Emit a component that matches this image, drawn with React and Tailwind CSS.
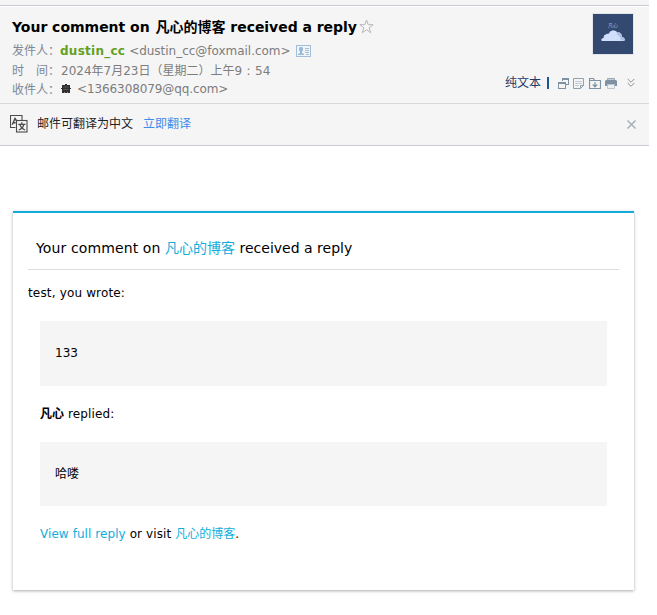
import React from 'react';

function AddressCard() {
  return (
    <svg className="ml-[5px] shrink-0" width="15" height="12" viewBox="0 0 15 12">
      <rect x=".5" y=".5" width="14" height="11" fill="#edf4fa" stroke="#a3bed8" />
      <path d="M2 10V9l2-1V7L3 5V3l1-1h2l1 1v2L6 7v1l2 1v1z" fill="#9bbad8" />
      <path d="M9 3.5h4M9 5.5h4M9 7.5h4M10 9.5h3" stroke="#a9bdcf" />
    </svg>
  );
}

function TranslateIcon() {
  return (
    <svg className="shrink-0" width="18" height="18" viewBox="0 0 18 18" fill="none" stroke="#4a4a4a" strokeWidth="1.1">
      <path d="M5.500 12.500H.5V.5h11.500V5" />
      <rect x="6.500" y="5.500" width="10.500" height="11.500" />
      <path d="M2.200 9.800 5 3.500l1.300 2M3.400 7.700h2.300" strokeWidth="1.400" />
      <path d="M8.300 9.300h7.200M11.800 7.300v2M8.800 15c2.800-1.200 4.500-3 5-5.700M9.900 9.300c.7 2.700 2.400 4.500 5.200 5.700" strokeWidth="1.300" />
    </svg>
  );
}

function Avatar() {
  return (
    <div className="flex h-[42px] w-[42px] flex-col items-center border border-[#e2e5ea] bg-[#344970]">
      <span className="mt-[8px] h-[8px] text-[5px] leading-[7px] text-[#a3b2d3]">凡心</span>
      <svg width="24" height="12" viewBox="0 0 24 12">
        <path d="M1 11a1.500 1.500 0 0 1 0-2.500L2.500 8 3 5.500 5.500 4 8 3.500l1-2L12 .3l3 .7 1 1.200 2.500.3 2 2 .5 2.500 2 .8L24 10l-1 1z" fill="#cfdffc" />
        <path d="m15 1.300 1 1 2.500.2 2 2 .5 2.500 2 .8L24 10l-1 .5h-3L19 7l-2.500-2z" fill="#b0c0e0" />
      </svg>
    </div>
  );
}

function Toolbar() {
  return (
    <div className="-mr-px flex h-4 items-center">
      <span className="text-[#1e3a66]">纯文本</span>
      <i className="ml-[6px] h-[12px] w-[2px] bg-[#1e5494]" />
      <svg className="ml-[9px]" width="11" height="11" viewBox="0 0 11 11" fill="none" stroke="#7e92a3" shapeRendering="crispEdges">
        <path d="M4.500 3V.5h6v6H7" /><path d="M4 1h7" strokeWidth="2" />
        <rect x=".5" y="4.500" width="7" height="6" fill="#f5f5f5" /><path d="M0 5h8" strokeWidth="2" />
      </svg>
      <svg className="ml-[4px]" width="11" height="11" viewBox="0 0 11 11" fill="none" stroke="#8fa0af">
        <path d="M.5.500h10v7l-3 3h-7z" /><path d="M2 3.500h7M2 5.500h7M2 7.500h4" stroke="#c3ccd4" /><path d="M7.500 10.500v-3h3" />
      </svg>
      <svg className="ml-[5px]" width="12" height="11" viewBox="0 0 12 11" fill="none" stroke="#7e92a3">
        <path d="M.5 10.500v-10h4l1 2h6v8z" strokeWidth="1.200" /><path d="M1 2.500h4" /><path d="M6 4v5M3.800 6.500 6 8.800l2.200-2.300" strokeWidth="1.200" />
      </svg>
      <svg className="ml-[4px]" width="12" height="11" viewBox="0 0 12 11">
        <path d="M2.500 3V.5h7V3" fill="#c3ccd4" stroke="#9baab6" />
        <path d="M1 2h10l1 1v5H0V3z" fill="#7e92a3" /><path d="M2.500 6.500h7v4h-7z" fill="#eef1f3" stroke="#b9c4cd" />
      </svg>
      <svg className="ml-[10px]" width="8" height="10" viewBox="0 0 8 10" fill="none" stroke="#8c8c8c">
        <path d="m.7 1 3.300 3.300L7.300 1M.7 5 4 8.300 7.300 5" />
      </svg>
    </div>
  );
}

function Header() {
  return (
    <header className="w-[649px] bg-[#f5f5f5] text-[#7c7c7c]">
      <div className="h-[6px] border-b border-[#c9c9d8]" />
      <div className="flex h-[98px] justify-between border-b border-t border-b-[#d8d8d8] border-t-white pl-[12px] pr-[15px]">
        <div className="pt-[10px]">
          <h1 className="flex h-[20px] items-center text-[14px] font-bold text-black">
            <span><span className="tracking-[-0.02px]">Your comment on </span><span className="ml-px">凡心的博客</span><span className="tracking-[-0.04px]"> received a reply</span></span>
            <svg className="mb-[2px] ml-[2px]" width="15" height="15" viewBox="0 0 15 15" fill="#fafafa" stroke="#b5b5b5">
              <path d="m7.500 1 1.700 4.700h4.900l-4 3 1.600 5-4.200-3-4.200 3 1.600-5-4-3h4.900z" />
            </svg>
          </h1>
          <div className="mt-[4px] flex h-[20px] items-center">
            <span className="w-[48px] text-[#7d8795]">发件人：</span>
            <b className="tracking-[0.25px] text-[#64a01e]">dustin_cc</b>
            <span className="ml-[4px] tracking-[-0.02px]">&lt;dustin_cc@foxmail.com&gt;</span>
            <AddressCard />
          </div>
          <div className="flex h-[20px] items-center whitespace-pre">
            <span className="w-[49px] text-[#7d8795]">时　间：</span>
            <span>2024年7月23日（星期二）上午9<span className="mx-[2.500px] inline-block w-[8px] text-center">:</span>54</span>
          </div>
          <div className="flex h-[17px] items-center">
            <span className="w-[49px] text-[#7d8795]">收件人：</span>
            <svg className="mb-px" width="10" height="10" viewBox="0 0 10 10" fill="#303030">
              <path d="M4 0h2v1h3v3h1v1H9v4H7V8.500H6V9H4v-.5H3V9H1V5H0V4h1V1h3z" />
              <path d="M2.500 3h5M2.500 5.500h5" stroke="#77736c" strokeWidth=".6" />
            </svg>
            <span className="mb-px ml-[6px] tracking-[-0.1px]">&lt;1366308079@qq.com&gt;</span>
          </div>
        </div>
        <div className="flex flex-col items-end justify-between pb-[12px] pt-[6px]">
          <Avatar />
          <Toolbar />
        </div>
      </div>
      <div className="flex h-[42px] items-center border-b border-[#c9c9d8] pb-px pl-[10px] pr-[13px]">
        <TranslateIcon />
        <span className="ml-[9px] text-[#222]">邮件可翻译为中文</span>
        <span className="ml-[10px] text-[#3f8ce8]">立即翻译</span>
        <svg className="ml-auto" width="9" height="9" viewBox="0 0 9 9" stroke="#a2acb5" strokeWidth="1.400">
          <path d="m.5.500 8 8M8.500.500l-8 8" />
        </svg>
      </div>
    </header>
  );
}

function Quote({ children, className }) {
  return <blockquote className={`flex items-center bg-[#f5f5f5] pl-[15px] ${className}`}>{children}</blockquote>;
}

export default function App() {
  return (
    <div className="h-[615px] w-[657px] overflow-hidden bg-white font-['Verdana','DejaVu_Sans','Noto_Sans_CJK_SC',sans-serif] text-[12px] leading-4 text-black">
      <Header />
      <main className="ml-[13px] mt-[65px] h-[379px] w-[621px] border-t-2 border-[#12addb] bg-white px-[15px] shadow-[0_1px_3px_#aaa]">
        <h2 className="flex h-[57px] items-center whitespace-pre border-b border-[#ddd] pl-[8px] pt-[14px] text-[14px]">
          <span className="tracking-[0.12px]">Your comment on </span><span className="text-[#12addb]">凡心的博客</span> received a reply
        </h2>
        <p className="mt-[15px] tracking-[0.16px]">test, you wrote:</p>
        <div className="px-[12px]">
          <Quote className="mt-[20px] h-[65px] pb-[2px]">133</Quote>
          <p className="mt-[20px] h-4"><b>凡心</b><span className="tracking-[0.12px]"> replied:</span></p>
          <Quote className="mt-[20px] h-[64px]">哈喽</Quote>
          <p className="mt-[20px] h-4">
            <span className="tracking-[0.07px] text-[#12addb]">View full reply</span><span className="tracking-[0.09px]"> or visit </span><span className="text-[#12addb]">凡心的博客</span>.
          </p>
        </div>
      </main>
    </div>
  );
}
